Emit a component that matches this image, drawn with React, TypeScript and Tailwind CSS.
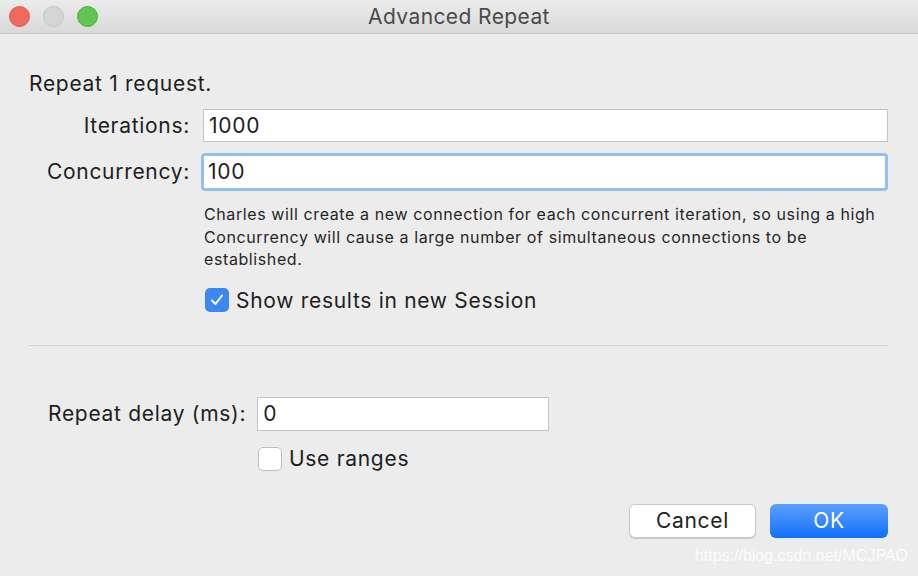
import React from "react";

const font = { fontFamily: "Inter, 'Noto Sans', sans-serif" };

function TitleBar() {
  return (
    <div className="relative flex h-[34px] items-center border-b border-[#c8c8c8] bg-gradient-to-b from-[#ececec] to-[#d9d9d9]">
      <div className="flex items-center gap-[13px] pl-[9px]">
        <span className="h-[21px] w-[21px] rounded-full border border-[#e0524a] bg-[#ee6a5f]" />
        <span className="h-[21px] w-[21px] rounded-full border border-[#c4c4c4] bg-[#d5d5d5]" />
        <span className="h-[21px] w-[21px] rounded-full border border-[#4eac3c] bg-[#61c454]" />
      </div>
      <div className="absolute inset-0 flex items-center justify-center text-[21px] tracking-[0.4px] text-[#4a4a4a]">
        Advanced Repeat
      </div>
    </div>
  );
}

function Checkbox({ checked }: { checked: boolean }) {
  return checked ? (
    <span className="flex h-[24px] w-[24px] items-center justify-center rounded-[5px] bg-[#3d87f5]">
      <svg width="16" height="16" viewBox="0 0 16 16" fill="none">
        <path d="M3 8.5 L6.5 12 L13 3.5" stroke="white" strokeWidth="2" strokeLinecap="round" strokeLinejoin="round" />
      </svg>
    </span>
  ) : (
    <span className="h-[24px] w-[24px] rounded-[5px] border border-[#bdbdbd] bg-white" />
  );
}

export default function App() {
  return (
    <div className="h-[576px] w-[918px] overflow-hidden bg-[#ececec] text-[21px] tracking-[0.7px] text-[#1e1e1e]" style={font}>
      <TitleBar />
      <div className="pl-[29px] pr-[30px] pt-[36px]">
        <div className="leading-[28px]">Repeat 1 request.</div>

        <div className="mt-[11px] grid grid-cols-[161px_1fr] items-center gap-x-[11px] gap-y-[11px]">
          <div className="text-right">Iterations:</div>
          <div className="ml-[2px] flex h-[33px] items-center border border-[#c4c4c4] bg-white pl-[5px]">
            1000
          </div>
          <div className="text-right">Concurrency:</div>
          <div className="flex h-[38px] items-center rounded-[4px] border-[3px] border-[#93c0ef] bg-white pl-[4px]">
            100
          </div>
        </div>

        <div className="ml-[175px] mt-[12px] text-[16px] leading-[22.5px] tracking-[0.6px] text-[#262626]">
          Charles will create a new connection for each concurrent iteration, so using a high
          Concurrency will cause a large number of simultaneous connections to be
          established.
        </div>

        <div className="ml-[176px] mt-[14px] flex items-center gap-[7px]">
          <Checkbox checked />
          <span>Show results in new Session</span>
        </div>

        <div className="mt-[29px] h-px bg-[#d4d4d4]" />

        <div className="ml-[19px] mt-[51px] flex items-center gap-[11px]">
          <span>Repeat delay (ms):</span>
          <div className="flex h-[34px] w-[292px] items-center border border-[#c4c4c4] bg-white pl-[5px]">
            0
          </div>
        </div>

        <div className="ml-[229px] mt-[12px] flex items-center gap-[7px]">
          <Checkbox checked={false} />
          <span>Use ranges</span>
        </div>

        <div className="mt-[29px] flex justify-end gap-[14px]">
          <button className="h-[34px] w-[127px] rounded-[6px] border border-[#c8c8c8] bg-white text-[#222] shadow-[0_1px_1px_rgba(0,0,0,0.15)]">
            Cancel
          </button>
          <button className="h-[34px] w-[118px] rounded-[6px] bg-gradient-to-b from-[#5aa0fb] to-[#0d6ffc] text-white">
            OK
          </button>
        </div>

        <div className="mr-[-20px] mt-[6px] flex justify-end text-[16px] tracking-normal text-white/80" style={{ fontFamily: "'Liberation Sans', Arial, sans-serif" }}>
          https://blog.csdn.net/MCJPAO
        </div>
      </div>
    </div>
  );
}
